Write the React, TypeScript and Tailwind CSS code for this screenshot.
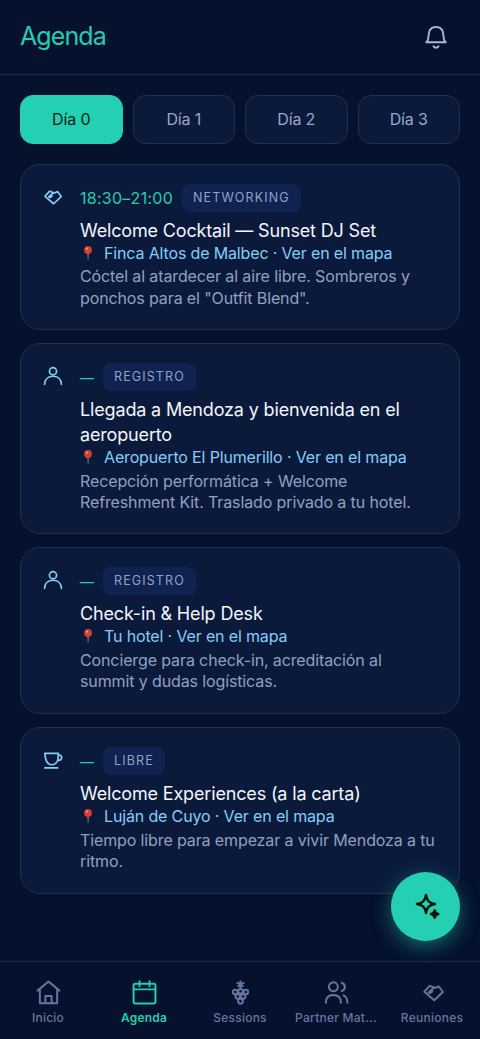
import React from "react";

type IconProps = { className?: string; width?: number };

function Icon({ children, className, width = 1.6 }: IconProps & { children: React.ReactNode }) {
  return (
    <svg viewBox="0 0 24 24" fill="none" stroke="currentColor" strokeWidth={width} strokeLinecap="round" strokeLinejoin="round" className={className}>
      {children}
    </svg>
  );
}

const Bell = (p: IconProps) => (
  <Icon {...p}>
    <path d="M2.300 17.200h19.400c-1.500-1.200-2-3-2.200-5.600l-.3-2.900C18.800 4.600 16.300 2 12 2S5.200 4.600 4.800 8.700l-.3 2.900c-.2 2.600-.7 4.400-2.200 5.600Z" />
    <path d="M9.500 21.300c.6 1 1.400 1.500 2.500 1.500s1.900-.5 2.500-1.500" />
  </Icon>
);

const Handshake = (p: IconProps) => (
  <Icon {...p}>
    <path d="M12.800 6.800 8 5 2.400 11.200l10.400 8.900 9-8.600-4.400-6-3.400 1.700-1.200-.4-5.900 5.200 1.600.6 2.300-1.600" />
  </Icon>
);

const Person = (p: IconProps) => (
  <Icon {...p}>
    <circle cx="12" cy="6.300" r="4.300" />
    <path d="M1.900 22c.3-6 4.400-9.700 10.100-9.700S21.800 16 22.100 22" />
  </Icon>
);

const Cup = (p: IconProps) => (
  <Icon {...p}>
    <path d="M2.200 4h16.100v4c0 5.500-3 9.700-7.900 9.700S2.800 13 2.200 4Z" />
    <path d="M18.300 6h1.200a3 3 0 0 1 2.900 3.200 3.500 3.500 0 0 1-3.700 3.200h-1.300M2.200 21.500h15.500" />
  </Icon>
);

const Home = (p: IconProps) => (
  <Icon {...p}>
    <path d="m1.500 10.200 10.500-8.700 10.500 8.700M3.700 8.600v13.700h16.600V8.600M9 22.300v-7h6v7" />
  </Icon>
);

const Calendar = (p: IconProps) => (
  <Icon {...p}>
    <rect x="1.500" y="3.700" width="21" height="18.800" rx="1.600" />
    <path d="M1.500 9h21M7.200 1.300V6M16.800 1.300V6" />
  </Icon>
);

const Grapes = (p: IconProps) => (
  <Icon {...p}>
    <circle cx="6.900" cy="11.500" r="2.200" />
    <circle cx="12" cy="10.800" r="2.200" />
    <circle cx="17.100" cy="11.500" r="2.200" />
    <circle cx="9.400" cy="15.800" r="2.200" />
    <circle cx="14.600" cy="15.800" r="2.200" />
    <circle cx="12" cy="20.400" r="2.300" />
    <path d="M12 8V1.300M12 4.200 9 2.800M12 4.200l3-1.400M12 4.500 9.800 6M12 4.500 14.200 6" />
  </Icon>
);

const People = (p: IconProps) => (
  <Icon {...p}>
    <circle cx="9" cy="6.500" r="4.300" />
    <path d="M1.800 21.800c0-4.700 2.700-7.400 7.200-7.400s7.200 2.700 7.200 7.400M17 2.600c2 .6 3 2 3 4s-1 3.400-3 4M18.700 14.700c2.600 1.100 3.800 3.500 3.800 7.100" />
  </Icon>
);

const Sparkles = ({ className }: IconProps) => (
  <svg viewBox="0 0 28 28" fill="none" stroke="currentColor" strokeWidth="2.500" strokeLinejoin="round" className={className}>
    <path d="M12 3c1 5.900 3.100 8 9 9-5.900 1-8 3.100-9 9-1-5.900-3.100-8-9-9 5.900-1 8-3.100 9-9Z" />
    <path d="M20.700 18c.6 2.300 1.600 3.300 3.900 4-2.300.7-3.300 1.700-3.900 4-.7-2.300-1.700-3.300-4-4 2.300-.7 3.300-1.700 4-4Z" fill="currentColor" strokeWidth="2" />
  </svg>
);

const Pin = () => (
  <svg viewBox="0 0 16 16" className="block h-4 w-4 shrink-0">
    <path d="M7.300 7h1.500l-.3 7.700h-.8Z" fill="#777f8d" />
    <circle cx="8" cy="4.900" r="3.900" fill="#d93d36" />
    <circle cx="6.900" cy="3.700" r="1.100" fill="#f3948b" />
  </svg>
);

type Event = {
  icon: (p: IconProps) => React.ReactElement;
  time?: string;
  tag: string;
  title: string[];
  place: string;
  text: string[];
  height: string;
};

const events: Event[] = [
  {
    icon: Handshake,
    time: "18:30–21:00",
    tag: "NETWORKING",
    title: ["Welcome Cocktail — Sunset DJ Set"],
    place: "Finca Altos de Malbec",
    text: ["Cóctel al atardecer al aire libre. Sombreros y", 'ponchos para el "Outfit Blend".'],
    height: "h-[166px]",
  },
  {
    icon: Person,
    tag: "REGISTRO",
    title: ["Llegada a Mendoza y bienvenida en el", "aeropuerto"],
    place: "Aeropuerto El Plumerillo",
    text: ["Recepción performática + Welcome", "Refreshment Kit. Traslado privado a tu hotel."],
    height: "h-[191px]",
  },
  {
    icon: Person,
    tag: "REGISTRO",
    title: ["Check-in & Help Desk"],
    place: "Tu hotel",
    text: ["Concierge para check-in, acreditación al", "summit y dudas logísticas."],
    height: "h-[167px]",
  },
  {
    icon: Cup,
    tag: "LIBRE",
    title: ["Welcome Experiences (a la carta)"],
    place: "Luján de Cuyo",
    text: ["Tiempo libre para empezar a vivir Mendoza a tu", "ritmo."],
    height: "h-[167px]",
  },
];

function EventCard({ event }: { event: Event }) {
  const EventIcon = event.icon;
  return (
    <article className={`flex rounded-[20px] border border-[#1d2f52] bg-[#0b1a3b] pt-[19px] pl-[22px] ${event.height}`}>
      <EventIcon className="mt-[3px] h-5 w-5 shrink-0 text-[#84cdf8]" width={2} />
      <div className="ml-[17px] min-w-0 flex-1 whitespace-nowrap">
        <div className="flex h-7 items-center gap-[9px]">
          {event.time ? (
            <span className="text-[16px] tracking-[0.270px] text-[#25cdb0]">{event.time}</span>
          ) : (
            <span className="flex h-7 w-[14px] items-center">
              <span className="text-[14px] font-medium text-[#25cdb0]">—</span>
            </span>
          )}
          <span className="flex h-7 items-center rounded-lg bg-[#102250] px-[11px] pt-px text-[12.500px] tracking-[1.120px] text-[#91a1c5]">{event.tag}</span>
        </div>
        <h2 className="mt-[6px] text-[18px] leading-[25px] tracking-[-0.160px] text-[#f3f6fc]">
          {event.title.map((line) => <span key={line} className="block">{line}</span>)}
        </h2>
        <a className="-mt-px flex h-[22px] items-center gap-2 text-[16px] tracking-[-0.150px] text-[#84cdf8]">
          <Pin />
          <span>{event.place} · Ver en el mapa</span>
        </a>
        <p className={`text-[16px] leading-[21.600px] tracking-[-0.120px] text-[#91a0c2] ${event.time ? "mt-[2px]" : "mt-[2.500px]"}`}>
          {event.text.map((line) => <span key={line} className="block">{line}</span>)}
        </p>
      </div>
    </article>
  );
}

const tabs = [
  { label: "Inicio", icon: Home },
  { label: "Agenda", icon: Calendar },
  { label: "Sessions", icon: Grapes },
  { label: "Partner Mat...", icon: People },
  { label: "Reuniones", icon: Handshake },
];

export default function App() {
  return (
    <div className="relative flex h-[1039px] w-[480px] flex-col overflow-hidden bg-[#05112d] font-['Inter',sans-serif] font-[430]">
      <header className="flex h-[75px] shrink-0 items-center justify-between border-b border-[#1d2b4b] pr-8 pl-5">
        <h1 className="text-[25px] font-[430] tracking-[-0.900px] text-[#25cdb0]">Agenda</h1>
        <Bell className="h-6 w-6 text-[#a7b8dc]" width={1.900} />
      </header>
      <nav className="mt-5 grid shrink-0 grid-cols-4 gap-[10px] px-5">
        {[0, 1, 2, 3].map((day) => (
          <button
            key={day}
            className={`h-[49px] rounded-[13px] border pb-[2px] text-[16px] tracking-[-0.150px] ${day === 0 ? "border-[#24d0b1] bg-[#24d0b1] text-[#07241f]" : "border-[#1d2f52] bg-[#0b1a3b] text-[#97a7cb]"}`}
          >
            Día {day}
          </button>
        ))}
      </nav>
      <main className="mt-5 flex flex-col gap-[13px] px-5">
        {events.map((event) => <EventCard key={event.title[0]} event={event} />)}
      </main>
      <footer className="mt-auto grid h-[78px] shrink-0 grid-cols-5 border-t border-[#1d2b4b] pt-[18px]">
        {tabs.map(({ label, icon: TabIcon }) => (
          <a key={label} className={`flex flex-col items-center gap-[4px] whitespace-nowrap text-[12px] leading-[18px] ${label === "Agenda" ? "font-semibold tracking-[0.200px] text-[#25cdb0]" : "font-medium tracking-[0.250px] text-[#6576a0]"}`}>
            <TabIcon className={label === "Reuniones" ? "my-px h-[23px] w-[23px] translate-x-[1px]" : "h-[25px] w-[25px]"} width={label === "Reuniones" ? 2 : 1.900} />
            {label}
          </a>
        ))}
      </footer>
      <button className="absolute top-[871.500px] left-[391px] flex h-[69px] w-[69px] items-center justify-center rounded-full bg-[#24d0b1] pl-[4px] text-[#10180e] shadow-[0_6px_20px_rgba(36,208,177,0.45)]">
        <Sparkles className="h-7 w-7" />
      </button>
    </div>
  );
}
